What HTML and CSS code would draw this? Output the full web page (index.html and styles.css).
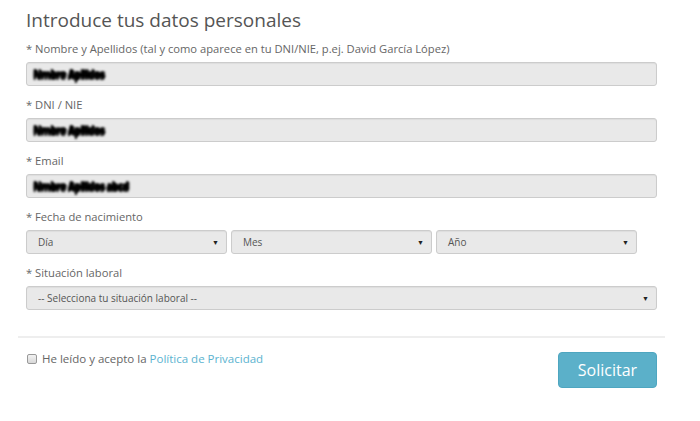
FILE: index.html
```html
<!DOCTYPE html>
<html lang="es">
<head>
  <meta charset="UTF-8">
  <title>Introduce tus datos personales</title>
  <link rel="stylesheet" href="styles.css">
</head>
<body>
  <div class="panel">
    <form class="datos">
      <h2>Introduce tus datos personales</h2>

      <label class="campo">* Nombre y Apellidos (tal y como aparece en tu DNI/NIE, p.ej. David García López)</label>
      <div class="input"><span class="tachado">Nmbre Apllidos</span></div>

      <label class="campo">* DNI / NIE</label>
      <div class="input"><span class="tachado">Nmbre Apllidos</span></div>

      <label class="campo">* Email</label>
      <div class="input"><span class="tachado">Nmbre Apllidos abcd</span></div>

      <label class="campo">* Fecha de nacimiento</label>
      <div class="fecha">
        <div class="select">Día<span class="flecha">&#9660;</span></div>
        <div class="select">Mes<span class="flecha">&#9660;</span></div>
        <div class="select">Año<span class="flecha">&#9660;</span></div>
        <div></div>
      </div>

      <label class="campo">* Situación laboral</label>
      <div class="select">-- Selecciona tu situación laboral --<span class="flecha">&#9660;</span></div>
    </form>

    <hr>

    <div class="pie">
      <label class="acepto"><span class="check"></span>He leído y acepto la&nbsp;<a href="#">Política de Privacidad</a></label>
      <button type="button" class="btn-solicitar">Solicitar</button>
    </div>
  </div>
</body>
</html>
```

FILE: styles.css
```css
body {
  margin: 0;
  font-family: "Open Sans", sans-serif;
  background: #fff;
  color: #666;
}

.panel {
  width: 647px;
  padding: 0 0 0 18px;
}

.datos {
  padding: 0 8px;
}

.datos h2 {
  margin: 0;
  padding-top: 7px;
  font-size: 19px;
  font-weight: normal;
  line-height: 26px;
  color: #555;
  margin-bottom: 8px;
}

.campo {
  display: block;
  font-size: 11.2px;
  line-height: 16px;
  color: #666;
  margin-bottom: 5px;
}

.input,
.select {
  box-sizing: border-box;
  height: 24px;
  background: #e9e9e9;
  border: 1px solid #ccc;
  border-radius: 3px;
  box-shadow: inset 0 1px 1px rgba(0, 0, 0, 0.05);
  margin-bottom: 11px;
  display: flex;
  align-items: center;
  padding: 0 6px;
  position: relative;
}

.tachado {
  font-size: 10px;
  font-weight: 800;
  color: #000;
  filter: blur(1.2px);
  letter-spacing: -0.6px;
  text-shadow: 0 2px 0 #000, 0 -1px 0 #111, 1px 0 0 #000;
}

.select {
  font-size: 10px;
  color: #555;
  padding: 0 11px;
}

.flecha {
  position: absolute;
  right: 7px;
  top: 7px;
  font-size: 7px;
  color: #222;
}

.fecha {
  display: grid;
  grid-template-columns: 201px 201px 201px 1fr;
  gap: 4px;
}

hr {
  border: 0;
  border-top: 2px solid #eee;
  margin: 26px 0 0;
}

.pie {
  display: flex;
  justify-content: space-between;
  align-items: flex-start;
  padding: 13px 8px 0 9px;
}

.acepto {
  display: flex;
  align-items: center;
  font-size: 11.5px;
  color: #666;
}

.check {
  width: 8px;
  height: 8px;
  border: 1px solid #999;
  border-radius: 2px;
  background: linear-gradient(#f2f2f2, #d8d8d8);
  margin-right: 5px;
}

.acepto a {
  color: #5bb3cf;
  text-decoration: none;
}

.btn-solicitar {
  width: 99px;
  height: 36px;
  background: #5bb0c9;
  border: 1px solid #4ea6c0;
  border-radius: 4px;
  color: #fff;
  font-family: "Open Sans", sans-serif;
  font-size: 16px;
  padding: 0;
  margin-top: 1px;
}
```
